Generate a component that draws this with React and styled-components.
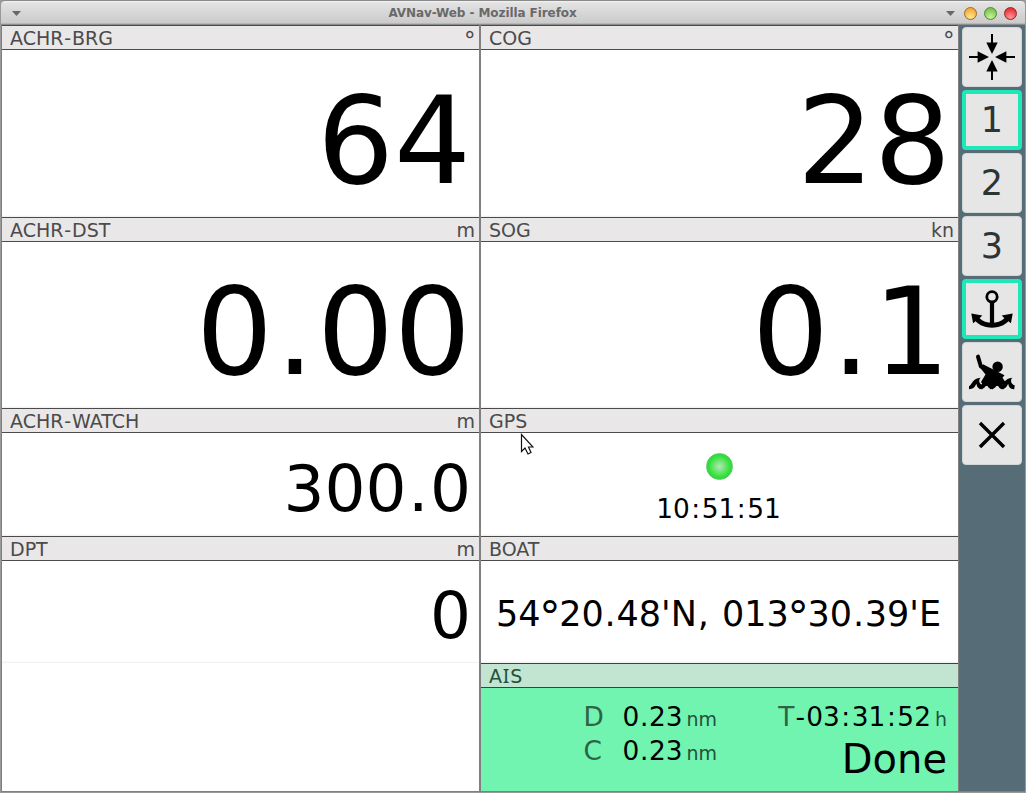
import React from "react";
import styled, { createGlobalStyle } from "styled-components";

const Global = createGlobalStyle`
  * { box-sizing: border-box; }
  html, body, #root { height: 100%; margin: 0; }
  body { overflow: hidden; background: #9b9b9b; font-family: "DejaVu Sans", sans-serif; color: #000; }
`;

const Window = styled.div`
  width: 1026px;
  height: 793px;
  display: flex;
  flex-direction: column;
  border: 1px solid #999;
  border-top-color: #8a8a8a;
  border-radius: 5px 5px 0 0;
  background: #808080;
  overflow: hidden;
`;

const TitleBar = styled.header`
  height: 24px;
  flex: none;
  display: flex;
  align-items: center;
  padding: 0 8px 0 11px;
  background: linear-gradient(#f4f4f4 0, #e2e2e2 2px, #cbcbcb 22px, #a3a3a3 23px, #777 24px);
`;

const Title = styled.h1`
  flex: 1;
  margin: 0;
  padding-right: 2px;
  text-align: center;
  font: bold 12px/24px "DejaVu Sans", sans-serif;
  letter-spacing: -0.08px;
  color: #696969;
`;

const Controls = styled.div`
  display: flex;
  align-items: center;
  gap: 7px;
`;

const Arrow = styled.i`
  flex: none;
  width: 9px;
  height: 5px;
  margin-top: 1px;
  margin-right: ${(p) => (p.$end ? "2px" : 0)};
  background: #686868;
  clip-path: polygon(0 0, 100% 0, 50% 100%);
`;

const Light = styled.i`
  width: 13px;
  height: 13px;
  border-radius: 50%;
  border: 1px solid ${(p) => p.$edge};
  background: radial-gradient(circle at 50% 85%, ${(p) => p.$glow}, ${(p) => p.$fill} 75%);
`;

const Content = styled.main`
  flex: 1;
  display: flex;
  margin-left: 1px;
  min-height: 0;
  padding-bottom: 1px;
`;

const Column = styled.section`
  width: ${(p) => p.$width}px;
  margin-right: ${(p) => p.$divider}px;
  display: flex;
  flex-direction: column;
  background: #fff;
`;

const Panel = styled.article`
  height: ${(p) => p.$height}px;
  flex: none;
  display: flex;
  flex-direction: column;
  --line: ${(p) => (p.$alert ? "#24503b" : "#4b4b4b")};
  background: ${(p) => (p.$alert ? "#71f4b0" : "#fff")};
  box-shadow: ${(p) => (p.$alert ? "none" : "inset 0 -2px 2px -1px #eeeeee")};
`;

const PanelHead = styled.div`
  height: 25px;
  flex: none;
  display: flex;
  justify-content: space-between;
  padding: 0 4px 0 8px;
  border-top: 1px solid var(--line);
  border-bottom: 1px solid var(--line);
  background: ${(p) => (p.$alert ? "#c1e5d1" : "#e9e7e8")};
  color: ${(p) => (p.$alert ? "#24503b" : "#4b4b4b")};
  font-size: 19px;
  line-height: 25px;
  white-space: nowrap;
`;

const Value = styled.div`
  flex: 1;
  display: flex;
  justify-content: flex-end;
  align-items: flex-end;
  padding: 0 ${(p) => p.$inset ?? 8}px 15px 0;
  font-size: ${(p) => p.$size}px;
  line-height: 1;
  white-space: pre;
`;

const Wide = styled.span`
  padding: 0 ${(p) => p.$extra / 2}em;
`;

const Degree = styled.span`
  font-size: 1.22em;
  line-height: 0;
  vertical-align: -0.13em;
  margin: 0 -0.03em;
`;

const SerifI = styled.span`
  font-family: "Noto Sans", sans-serif;
  font-size: 19.5px;
  line-height: 0;
  padding: 0 0.8px;
`;

const GpsBody = styled.div`
  flex: 1;
  display: flex;
  flex-direction: column;
  align-items: center;
  padding-top: 20px;
  font-size: 26.4px;
  line-height: 30px;
  gap: 14px;
`;

const Clock = styled.div`
  padding-right: 2px;
`;

const StatusDot = styled.i`
  width: 27px;
  height: 27px;
  border-radius: 50%;
  border: 1px solid #5fc65f;
  background: radial-gradient(circle, #b4e8b4 0, #2ee03a 62%, #0fdf1c 100%);
`;

const Position = styled.div`
  flex: 1;
  display: flex;
  justify-content: center;
  padding: 33px 2px 0 0;
  font-size: 35px;
  line-height: 40px;
  white-space: pre;
`;

const AisBody = styled.div`
  flex: 1;
  display: flex;
  justify-content: flex-end;
  padding: 12px 11px 0 0;
  font-size: 26.4px;
  line-height: 34px;
  white-space: pre;
`;

const Distances = styled.div`
  display: grid;
  grid-template-columns: 39px auto auto;
  grid-auto-rows: 34px;
  align-content: start;
  align-items: baseline;
  margin-right: 61px;
`;

const Timing = styled.div`
  display: flex;
  flex-direction: column;
  align-items: flex-end;
`;

const Key = styled.span`
  color: #2e6347;
`;

const Unit = styled.span`
  margin-left: 4px;
  font-size: 19px;
  color: #24503b;
`;

const Done = styled.div`
  margin-top: 1px;
  font-size: 40px;
  line-height: 44px;
`;

const Sidebar = styled.nav`
  flex: 1;
  display: flex;
  flex-direction: column;
  gap: 3px;
  padding: 2px 0 0 3px;
  background: #566d78;
`;

const ToolButton = styled.button`
  width: 60px;
  height: 60px;
  flex: none;
  display: flex;
  align-items: center;
  justify-content: center;
  margin: 0;
  padding: 0;
  border: ${(p) => (p.$active ? "4px solid #1fe8b8" : "1px solid #d2d6d6")};
  border-radius: 4px;
  background: #e6e6e6;
  color: #2c3436;
  font: 35px/1 "DejaVu Sans", sans-serif;
  svg { flex: none; display: block; }
`;

const Pointer = styled.svg`
  position: absolute;
  left: 520px;
  top: 433px;
`;

const EXTRA = { ".": 0.046, ",": 0.046, ":": 0.117, "-": 0.093, " ": 0.034 };

function Spaced({ children }) {
  return (
    <span>
      {children.split(/([.,:\-° ])/).map((part, i) => {
        if (part === "°") return <Degree key={i}>°</Degree>;
        return EXTRA[part] ? <Wide key={i} $extra={EXTRA[part]}>{part}</Wide> : part;
      })}
    </span>
  );
}

function Gauge({ name, unit, height, alert, children }) {
  return (
    <Panel $height={height} $alert={alert}>
      <PanelHead $alert={alert}>
        {typeof name === "string" ? <Spaced>{name}</Spaced> : name}
        {unit && <Spaced>{unit}</Spaced>}
      </PanelHead>
      {children}
    </Panel>
  );
}

const CenterIcon = () => (
  <svg width="48" height="48" viewBox="0 0 48 48">
    {[0, 90, 180, 270].map((a) => (
      <g key={a} transform={`rotate(${a} 24 24)`}>
        <path d="M24 1V11" stroke="#000" strokeWidth="2" />
        <path d="M18.3 9.6H29.7L24 21Z" fill="#000" />
      </g>
    ))}
  </svg>
);

const AnchorIcon = () => (
  <svg width="48" height="48" viewBox="0 0 48 48">
    <circle cx="24" cy="11.8" r="5.2" fill="none" stroke="#000" strokeWidth="2.8" />
    <path d="M24 16.5V40" stroke="#000" strokeWidth="4.2" />
    <path d="M3.3 28.6L14.3 30.6L11.6 33.2C17.5 39.3 30.5 39.3 36.4 33.2L33.7 30.6L44.7 28.6L42.9 38.2L40.4 36.2C32.5 44.8 15.5 44.8 7.6 36.2L5.1 38.2Z" />
  </svg>
);

const OverboardIcon = () => (
  <svg width="48" height="48" viewBox="0 0 48 48" fill="#000">
    <circle cx="29.6" cy="18.7" r="5.2" />
    <path d="M10 8.6L12.8 18.2L20 22.5" fill="none" stroke="#000" strokeWidth="4" strokeLinecap="round" strokeLinejoin="round" />
    <path d="M12 19.5L15 16.2L36.5 27.2L34.5 29.8L38 35L32 38H16L13 34L17.5 26.5Z" />
    {[0, 10.6, 21.2, 31.8].map((x) => (
      <path
        key={x}
        transform={`translate(${x} 0)`}
        d="M1 38.2C4.2 36.8 4.4 30.2 12.6 29.8C10.6 31.2 10.4 35.8 15 37.6L14.4 41.2C11 41.6 8.8 39.4 8.4 35.8C6.6 39.6 4.6 41.2 1 41.2Z"
      />
    ))}
  </svg>
);

const CloseIcon = () => (
  <svg width="48" height="48" viewBox="0 0 48 48">
    <path d="M12 12L36 36M36 12L12 36" stroke="#000" strokeWidth="3.4" />
  </svg>
);

export default function App() {
  return (
    <>
      <Global />
      <Window>
        <TitleBar>
          <Arrow />
          <Title>AVNav-Web - Mozilla Firefox</Title>
          <Controls>
            <Arrow $end />
            <Light $edge="#9c6b1c" $fill="#f3ac3a" $glow="#ffe69a" />
            <Light $edge="#52862f" $fill="#7fc353" $glow="#c7f59b" />
            <Light $edge="#a01f26" $fill="#e6343e" $glow="#ff9a9a" />
          </Controls>
        </TitleBar>
        <Content>
          <Column $width={477} $divider={2}>
            <Gauge name="ACHR-BRG" unit="°" height={192}>
              <Value $size={121}>64</Value>
            </Gauge>
            <Gauge name="ACHR-DST" unit="m" height={191}>
              <Value $size={121}><Spaced>0.00</Spaced></Value>
            </Gauge>
            <Gauge name="ACHR-WATCH" unit="m" height={128}>
              <Value $size={64.5}><Spaced>300.0</Spaced></Value>
            </Gauge>
            <Gauge name="DPT" unit="m" height={127}>
              <Value $size={64.5}>0</Value>
            </Gauge>
          </Column>
          <Column $width={477} $divider={1}>
            <Gauge name="COG" unit="°" height={192}>
              <Value $size={121} $inset={7}>28</Value>
            </Gauge>
            <Gauge name="SOG" unit="kn" height={191}>
              <Value $size={121}><Spaced>0.1</Spaced></Value>
            </Gauge>
            <Gauge name="GPS" height={128}>
              <GpsBody>
                <StatusDot />
                <Clock><Spaced>10:51:51</Spaced></Clock>
              </GpsBody>
            </Gauge>
            <Gauge name="BOAT" height={127}>
              <Position><Spaced>54°20.48'N, 013°30.39'E</Spaced></Position>
            </Gauge>
            <Gauge name={<span>A<SerifI>I</SerifI>S</span>} height={128} alert>
              <AisBody>
                <Distances>
                  <Key>D</Key><Spaced>0.23</Spaced><Unit>nm</Unit>
                  <Key>C</Key><Spaced>0.23</Spaced><Unit>nm</Unit>
                </Distances>
                <Timing>
                  <div><Key>T</Key><Spaced>-03:31:52</Spaced><Unit>h</Unit></div>
                  <Done>Done</Done>
                </Timing>
              </AisBody>
            </Gauge>
          </Column>
          <Sidebar>
            <ToolButton><CenterIcon /></ToolButton>
            <ToolButton $active>1</ToolButton>
            <ToolButton>2</ToolButton>
            <ToolButton>3</ToolButton>
            <ToolButton $active><AnchorIcon /></ToolButton>
            <ToolButton><OverboardIcon /></ToolButton>
            <ToolButton><CloseIcon /></ToolButton>
          </Sidebar>
        </Content>
      </Window>
      <Pointer width="14" height="23" viewBox="0 0 14 23">
        <path d="M1.5 1.5V18.5L5 15L8 21L11 19.5L8.5 14H13Z" fill="#fff" stroke="#111" strokeWidth="1.2" />
      </Pointer>
    </>
  );
}
